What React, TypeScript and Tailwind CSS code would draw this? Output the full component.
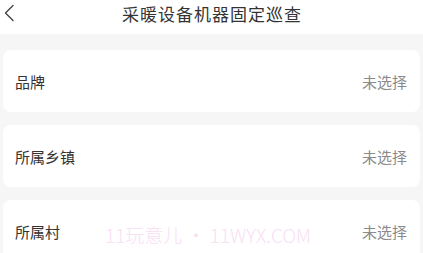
import React from "react"

const rows = ["品牌", "所属乡镇", "所属村"]

export default function App() {
  return (
    <div
      className="relative w-[423px] h-[253px] overflow-hidden bg-[#f6f6f6]"
      style={{ fontFamily: '"Noto Sans CJK SC", "Noto Sans", sans-serif' }}
    >
      {/* header */}
      <div className="relative flex h-[34px] items-center justify-center bg-white">
        <svg className="absolute left-[3px] top-[4px]" width="12" height="18" viewBox="0 0 12 18" fill="none">
          <path d="M10 1.5 L2.5 9 L10 16.5" stroke="#444" strokeWidth="1.4" strokeLinecap="round" strokeLinejoin="round" />
        </svg>
        <span className="text-[17px] leading-none tracking-[1px] text-[#333] pl-[1px] -mt-[7px]">采暖设备机器固定巡查</span>
      </div>

      {/* list */}
      <div className="flex flex-col gap-[13px] px-[3px] pt-[16px]">
        {rows.map((label) => (
          <div key={label} className="flex h-[62px] items-center justify-between rounded-[8px] bg-white pl-[12px] pr-[13px] pt-[2px]">
            <span className="text-[15px] text-[#333]">{label}</span>
            <span className="text-[15px] text-[#8a8a8a]">未选择</span>
          </div>
        ))}
      </div>

      {/* watermark */}
      <div className="absolute left-[105px] top-[221px] text-[19px] font-light text-[#f8e0f3] whitespace-nowrap">
        11玩意儿 • 11WYX.COM
      </div>
    </div>
  )
}
